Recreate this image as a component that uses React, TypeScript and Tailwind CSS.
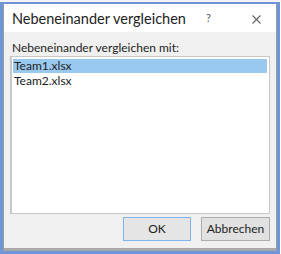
export default function App() {
  const font = { fontFamily: 'Lato, "Noto Sans", sans-serif' };
  return (
    <div className="w-[281px] h-[254px] bg-white relative overflow-hidden" style={font}>
      <div className="h-[2px] bg-[#f4f4f4]" />
      <div className="w-[280px] h-[252px] border-[3px] border-[#6f95d9] border-t-[2px] flex flex-col">
        <div className="flex-1 flex flex-col border-l border-[#9a9a9a] border-r border-b-[3px] border-b-[#a8a8a8]">
          <div className="h-[28px] bg-white flex items-center pl-[8px] text-[14.5px] text-[#222]">
            <span className="flex-1 min-w-0 whitespace-nowrap leading-none pt-[2px]">Nebeneinander vergleichen</span>
            <span className="w-[8px] text-[11px] text-[#555] mr-[38px] pt-[1px]">?</span>
            <svg width="9" height="9" viewBox="0 0 9 9" className="mr-[15px] mt-[2px]">
              <path d="M0.5 0.5 L8.5 8.5 M8.5 0.5 L0.5 8.5" stroke="#666" strokeWidth="1.1" fill="none" />
            </svg>
          </div>
          <div className="flex-1 bg-[#f0f0f0] flex flex-col px-[6px] pt-[8px]">
            <div className="text-[12px] leading-[16px] text-[#222] pl-[2px]">Nebeneinander vergleichen mit:</div>
            <div className="mt-[0px] h-[158px] bg-white border border-[#c8c8c8] border-l-[2px] p-[2px] pl-[1px] text-[12px] text-[#222]">
              <div className="bg-[#99c9ef] leading-[14px] h-[14px] pl-[1px]">Team1.xlsx</div>
              <div className="leading-[16px] pl-[1px]">Team2.xlsx</div>
            </div>
            <div className="flex justify-end gap-[10px] mt-[3px]">
              <div className="w-[68px] h-[24px] border border-[#7eb4ea] bg-[#e5e5e5] flex items-center justify-center text-[12px] text-[#222]">OK</div>
              <div className="w-[69px] h-[24px] border border-[#adadad] bg-[#e1e1e1] flex items-center justify-center text-[12px] text-[#222]">Abbrechen</div>
            </div>
          </div>
        </div>
      </div>
    </div>
  );
}
